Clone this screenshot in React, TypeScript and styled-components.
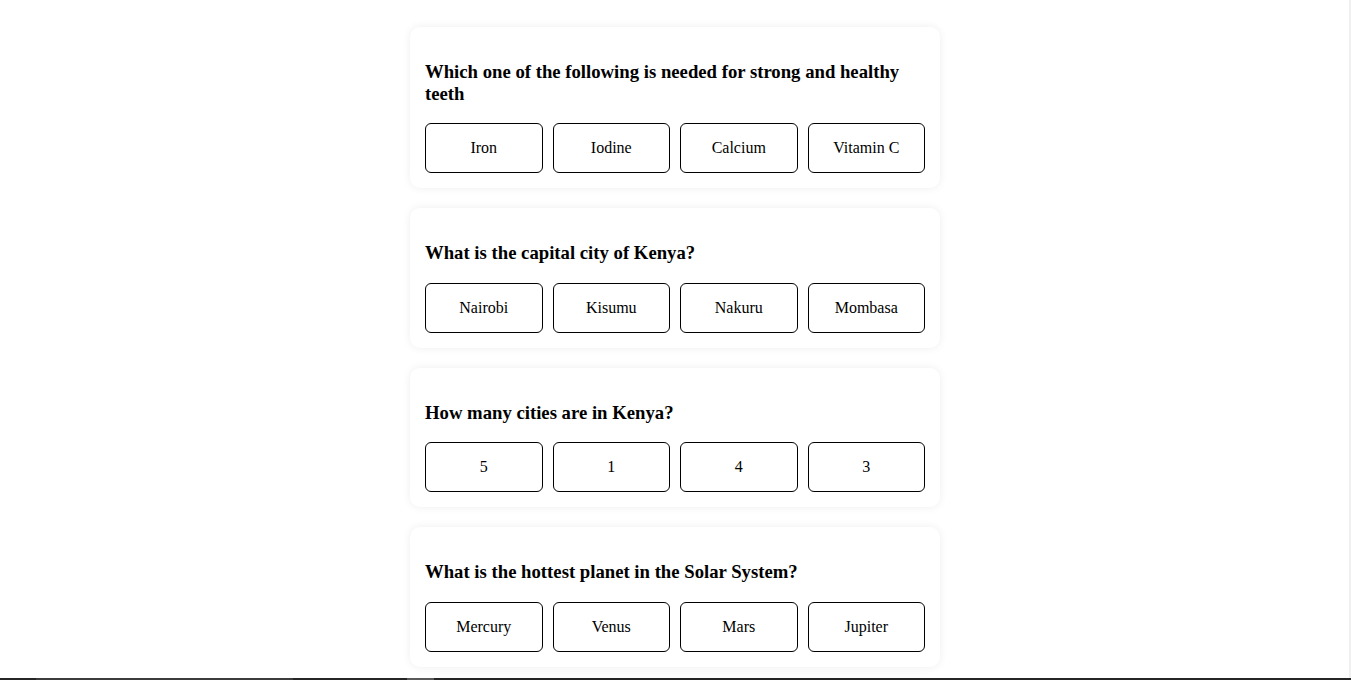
import React from "react";
import styled, { createGlobalStyle } from "styled-components";

const Global = createGlobalStyle`
  html, body { margin: 0; padding: 0; background: #fff; }
  body { font-family: "Liberation Serif", "Times New Roman", serif; color: #000; }
`;

const Page = styled.main`
  display: flex;
  flex-direction: column;
  align-items: center;
  gap: 20px;
  padding: 27px 1px 40px 0;
`;

const Card = styled.section`
  width: 530px;
  box-sizing: border-box;
  padding: 15px;
  background: #fff;
  border-radius: 10px;
  box-shadow: 0 0 8px rgba(0, 0, 0, 0.07);
`;

const Question = styled.h3`
  font-size: 18.72px;
  font-weight: bold;
  margin: 18.72px 0 18.72px;
  line-height: 22px;
`;

const Options = styled.div`
  display: grid;
  grid-template-columns: repeat(4, 1fr);
  gap: 10px;
`;

const Option = styled.button`
  height: 50px;
  background: #fff;
  border: 1px solid #000;
  border-radius: 6px;
  font-family: "Liberation Serif", "Times New Roman", serif;
  font-size: 16px;
  color: #000;
  cursor: pointer;
`;

const BottomBar = styled.div`
  position: fixed;
  left: 0;
  right: 0;
  bottom: 0;
  height: 2px;
  background: #262626;
  display: flex;
`;

const BarSeg = styled.span<{ $w: number; $c?: string }>`
  flex: 0 0 ${(p) => p.$w}px;
  background: ${(p) => p.$c ?? "transparent"};
`;

const EdgeStrip = styled.div`
  position: fixed;
  top: 0;
  right: 0;
  bottom: 2px;
  width: 2px;
  background: #f0f0f0;
`;

const questions = [
  {
    q: "Which one of the following is needed for strong and healthy teeth",
    a: ["Iron", "Iodine", "Calcium", "Vitamin C"],
  },
  { q: "What is the capital city of Kenya?", a: ["Nairobi", "Kisumu", "Nakuru", "Mombasa"] },
  { q: "How many cities are in Kenya?", a: ["5", "1", "4", "3"] },
  {
    q: "What is the hottest planet in the Solar System?",
    a: ["Mercury", "Venus", "Mars", "Jupiter"],
  },
];

export default function App() {
  return (
    <>
      <Global />
      <Page>
        {questions.map((item) => (
          <Card key={item.q}>
            <Question>{item.q}</Question>
            <Options>
              {item.a.map((o) => (
                <Option key={o}>{o}</Option>
              ))}
            </Options>
          </Card>
        ))}
      </Page>
      <EdgeStrip />
      <BottomBar>
        <BarSeg $w={36} />
        <BarSeg $w={257} $c="#3c3c3c" />
        <BarSeg $w={114} />
        <BarSeg $w={27} $c="#5a5a5a" />
      </BottomBar>
    </>
  );
}
